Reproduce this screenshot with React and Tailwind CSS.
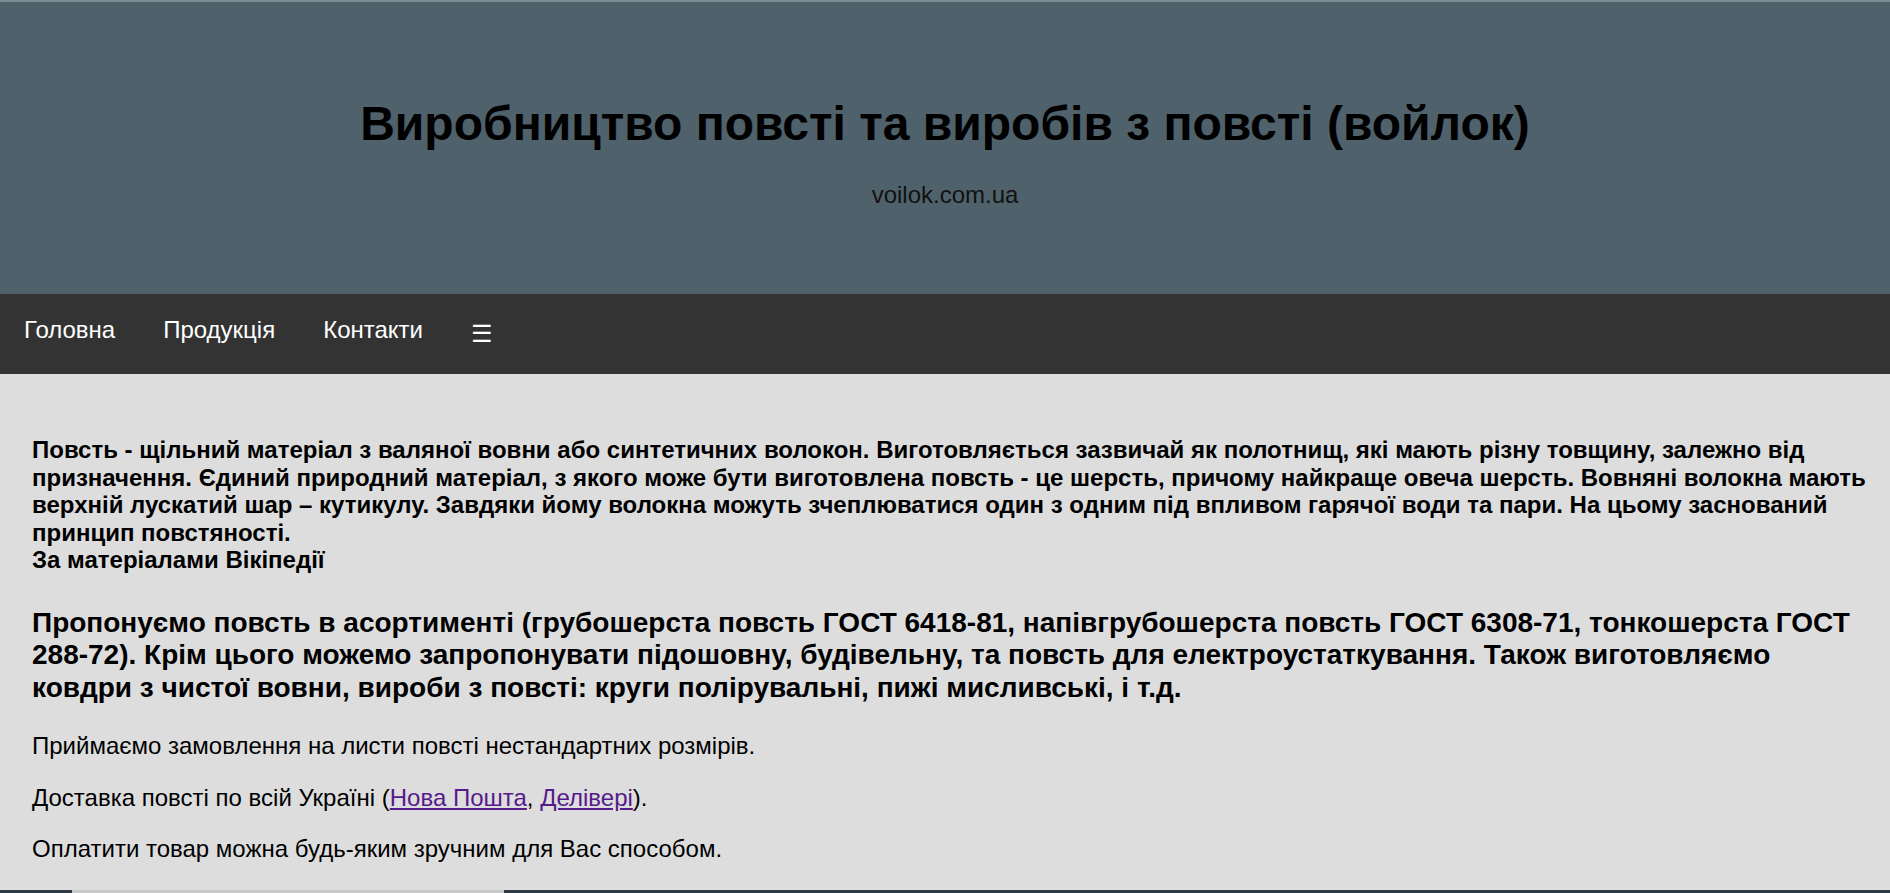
export default function App() {
  return (
    <div className="min-h-[893px] flex flex-col bg-[#dddddd] font-['Liberation_Sans',Arial,sans-serif] text-black">
      <header className="h-[294px] bg-[#4f616b] border-t-2 border-[#7d8d96] flex flex-col items-center pt-[94px]">
        <h1 className="text-[48px] leading-[55px] font-bold">Виробництво повсті та виробів з повсті (войлок)</h1>
        <p className="mt-[30px] text-[24px] leading-[28px] text-[#111]">voilok.com.ua</p>
      </header>
      <nav className="h-[80px] bg-[#333333] flex items-start text-white text-[24px] leading-[28px]">
        <a className="px-6 pt-[22px]">Головна</a>
        <a className="px-6 pt-[22px]">Продукція</a>
        <a className="px-6 pt-[22px]">Контакти</a>
        <a className="px-6 pt-[26px]">☰</a>
      </nav>
      <main className="flex-1 pl-[32px] pr-[14px] pt-[62px] pb-[14px]">
        <h4 className="text-[24px] leading-[27.6px] font-bold">
          Повсть - щільний матеріал з валяної вовни або синтетичних волокон. Виготовляється зазвичай як полотнищ, які мають різну товщину, залежно від призначення. Єдиний природний матеріал, з якого може бути виготовлена повсть - це шерсть, причому найкраще овеча шерсть. Вовняні волокна мають верхній лускатий шар – кутикулу. Завдяки йому волокна можуть зчеплюватися один з одним під впливом гарячої води та пари. На цьому заснований принцип повстяності.
          <br />
          За матеріалами Вікіпедії
        </h4>
        <h3 className="mt-[33px] pr-[18px] text-[28px] leading-[32.4px] font-bold">
          Пропонуємо повсть в асортименті (грубошерста повсть ГОСТ 6418-81, напівгрубошерста повсть ГОСТ 6308-71, тонкошерста ГОСТ 288-72). Крім цього можемо запропонувати підошовну, будівельну, та повсть для електроустаткування. Також виготовляємо ковдри з чистої вовни, вироби з повсті: круги полірувальні, пижі мисливські, і т.д.
        </h3>
        <p className="mt-[28px] text-[24px] leading-[27.6px]">Приймаємо замовлення на листи повсті нестандартних розмірів.</p>
        <p className="mt-[24px] text-[24px] leading-[27.6px]">
          Доставка повсті по всій Україні (<a className="text-[#551a8b] underline">Нова Пошта</a>, <a className="text-[#551a8b] underline">Делівері</a>).
        </p>
        <p className="mt-[24px] text-[24px] leading-[27.6px]">Оплатити товар можна будь-яким зручним для Вас способом.</p>
      </main>
      <div className="flex h-[3px]">
        <div className="w-[72px] bg-[#2c3b43]"></div>
        <div className="w-[432px] bg-[#c8c8c8]"></div>
        <div className="flex-1 bg-[#2c3b43]"></div>
      </div>
    </div>
  );
}
